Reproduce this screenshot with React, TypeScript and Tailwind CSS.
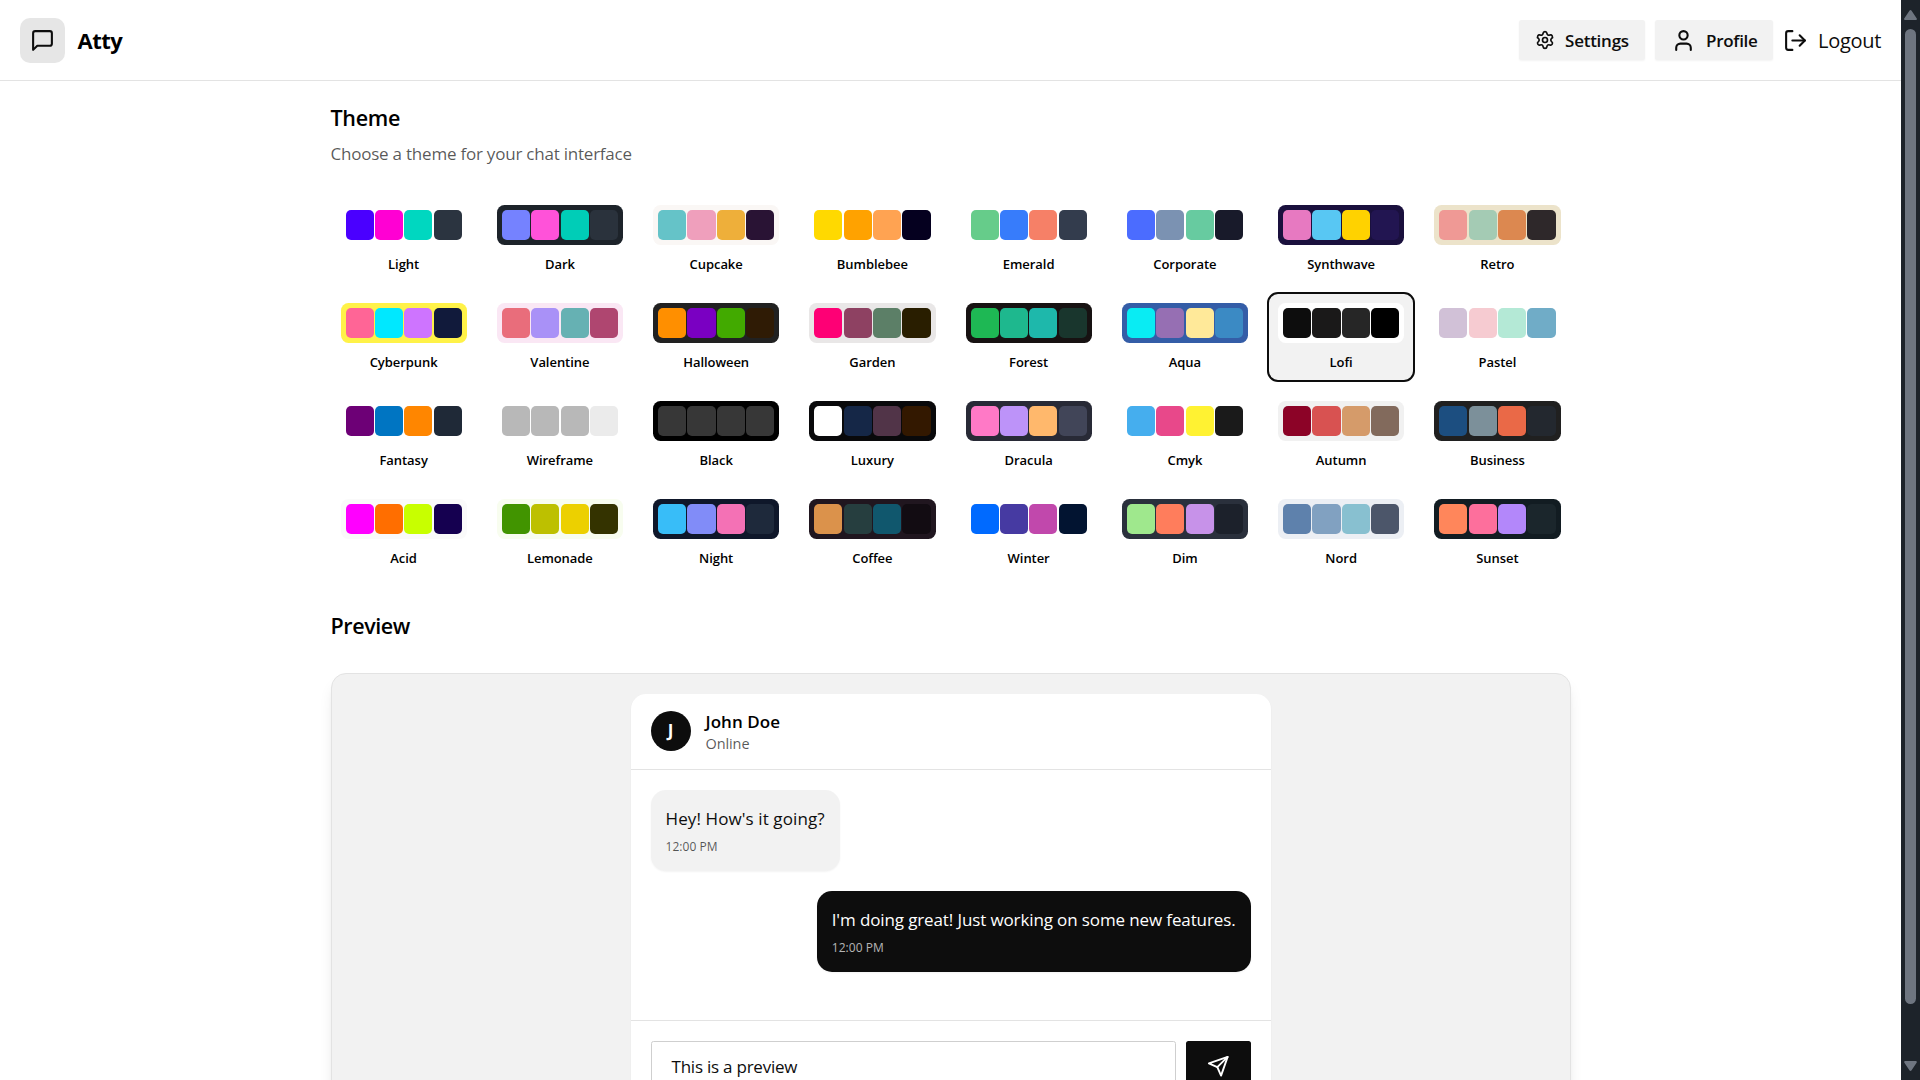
import { Settings, User, LogOut } from "lucide-react";

type Theme = [name: string, base: string, primary: string, secondary: string, accent: string, neutral: string];

const themes: Theme[] = [
  ["Light", "#ffffff", "#4a00ff", "#ff00d3", "#00d7c0", "#2b3440"],
  ["Dark", "#1d232a", "#7582ff", "#ff52d9", "#00cdb7", "#2a323c"],
  ["Cupcake", "#faf7f5", "#65c3c8", "#ef9fbc", "#eeaf3a", "#291334"],
  ["Bumblebee", "#ffffff", "#ffd900", "#ffa200", "#ffa352", "#05001f"],
  ["Emerald", "#ffffff", "#66cc8a", "#377cfb", "#f68067", "#333c4d"],
  ["Corporate", "#ffffff", "#4b6cff", "#7b92b2", "#67cba0", "#181a2a"],
  ["Synthwave", "#1a103d", "#e779c1", "#58c7f3", "#ffd200", "#221551"],
  ["Retro", "#ece3ca", "#ef9995", "#a4cbb4", "#dc8850", "#2e282a"],
  ["Cyberpunk", "#fff248", "#ff6596", "#00e8ff", "#ce74ff", "#111a3b"],
  ["Valentine", "#fae7f4", "#e96d7b", "#a991f7", "#66b1b3", "#af4670"],
  ["Halloween", "#212121", "#ff8f00", "#7a00c2", "#42aa00", "#2f1b05"],
  ["Garden", "#e9e7e7", "#fe0075", "#8e4162", "#5c7f67", "#291e00"],
  ["Forest", "#171212", "#1eb854", "#1eb88e", "#1eb8ab", "#19362d"],
  ["Aqua", "#345da7", "#09ecf3", "#966fb3", "#ffe999", "#3b8ac4"],
  ["Lofi", "#ffffff", "#0d0d0d", "#1a1919", "#262626", "#000000"],
  ["Pastel", "#ffffff", "#d1c1d7", "#f6cbd1", "#b4e9d6", "#70acc7"],
  ["Fantasy", "#ffffff", "#6d0076", "#0075c2", "#ff8600", "#1f2937"],
  ["Wireframe", "#ffffff", "#b8b8b8", "#b8b8b8", "#b8b8b8", "#ebebeb"],
  ["Black", "#000000", "#373737", "#373737", "#373737", "#373737"],
  ["Luxury", "#09090b", "#ffffff", "#152747", "#513448", "#331800"],
  ["Dracula", "#282a36", "#ff79c6", "#bd93f9", "#ffb86c", "#414558"],
  ["Cmyk", "#ffffff", "#45aeee", "#e8488a", "#fff232", "#1a1a1a"],
  ["Autumn", "#f1f1f1", "#8c0327", "#d85251", "#d59b6a", "#826a5c"],
  ["Business", "#202020", "#1c4e80", "#7c909a", "#ea6947", "#23282f"],
  ["Acid", "#fafafa", "#ff00ff", "#ff6e00", "#c8ff00", "#150050"],
  ["Lemonade", "#f8fdef", "#419400", "#bdc000", "#ecd000", "#343300"],
  ["Night", "#0f172a", "#38bdf8", "#818cf8", "#f471b5", "#1e293b"],
  ["Coffee", "#20161f", "#db924b", "#263e3f", "#10576d", "#120c12"],
  ["Winter", "#ffffff", "#006aff", "#463aa2", "#c148ac", "#021431"],
  ["Dim", "#2a303c", "#9fe88d", "#ff7d5c", "#c792e9", "#1c212b"],
  ["Nord", "#eceff4", "#5e81ac", "#81a1c1", "#88c0d0", "#4c566a"],
  ["Sunset", "#121c22", "#ff865b", "#fd6f9c", "#b387fa", "#1b262c"],
];

const selected = "Lofi";

function ThemeCard({ theme }: { theme: Theme }) {
  const [name, base, ...swatches] = theme;
  const active =
    name === selected ? "bg-[#f2f2f2] outline-2 -outline-offset-1 outline-[#0d0d0d]" : "";
  return (
    <button className={`flex h-[88px] flex-col items-center gap-[8.5px] rounded-[10px] p-[10px] ${active}`}>
      <div
        className="grid h-10 w-full shrink-0 grid-cols-4 gap-[1.25px] rounded-[7.5px] p-[5px]"
        style={{ backgroundColor: base }}
      >
        {swatches.map((color, i) => (
          <div key={i} className="rounded-[5px]" style={{ backgroundColor: color }} />
        ))}
      </div>
      <span className="text-[13px] leading-[20px] font-semibold tracking-[-0.05px] text-black">{name}</span>
    </button>
  );
}

function Header() {
  return (
    <header className="flex h-[81px] shrink-0 items-center justify-between border-b border-[#e3e3e3] px-5">
      <div className="flex items-center gap-[12.5px]">
        <div className="flex size-[45px] items-center justify-center rounded-[10px] bg-[#e6e6e6]">
          <svg
            width="25"
            height="25"
            viewBox="0 0 24 24"
            fill="none"
            stroke="#0d0d0d"
            strokeWidth="2"
            strokeLinecap="round"
            strokeLinejoin="round"
          >
            <path d="M21 15a2 2 0 0 1-2 2H7l-4 4V5a2 2 0 0 1 2-2h14a2 2 0 0 1 2 2z" />
          </svg>
        </div>
        <h1 className="text-[22px] leading-[30px] font-bold tracking-[-0.5px] text-black">Atty</h1>
      </div>
      <nav className="flex items-center gap-[10px]">
        <button className="flex h-10 w-[126px] items-center gap-[10px] rounded-[2.5px] bg-[#f2f2f2] pl-4 text-[17px] font-semibold tracking-[-0.25px] shadow-xs">
          <Settings size={20} />
          <span className="pt-[2px]">Settings</span>
        </button>
        <button className="flex h-10 w-[118px] items-center gap-[10px] rounded-[2.5px] bg-[#f2f2f2] pl-4 text-[17px] font-semibold tracking-[-0.3px] shadow-xs">
          <User size={25} />
          <span className="pt-[2px]">Profile</span>
        </button>
        <button className="flex items-center gap-[10px] text-[20px] leading-[30px] tracking-[-0.3px]">
          <LogOut size={25} />
          <span className="pt-[2px]">Logout</span>
        </button>
      </nav>
    </header>
  );
}

function Bubble({ text, own }: { text: string; own?: boolean }) {
  const look = own
    ? "self-end bg-[#0d0d0d] text-white tracking-[-0.12px]"
    : "self-start bg-[#f2f2f2] tracking-[0.1px]";
  const time = own ? "text-white/70" : "text-[#0d0d0d]/70";
  return (
    <div className={`flex h-[81px] flex-col rounded-[15px] px-[15px] pt-[15px] shadow-xs ${look}`}>
      <p className="text-[17px] leading-[27px] whitespace-nowrap">{text}</p>
      <p className={`mt-[7px] text-[12px] leading-[16px] tracking-[0.05px] ${time}`}>12:00 PM</p>
    </div>
  );
}

function Preview() {
  return (
    <section className="mt-[30px] flex h-[520px] shrink-0 justify-center rounded-[15px] border border-[#e3e3e3] bg-[#f2f2f2] pt-5 shadow-lg">
      <div className="flex h-[480px] w-[640px] flex-col overflow-hidden rounded-[15px] bg-white shadow-xs">
        <div className="flex h-[76px] shrink-0 items-center gap-[15px] border-b border-[#e3e3e3] px-5">
          <div className="mb-[2px] flex size-10 items-center justify-center rounded-full bg-[#0d0d0d] text-[17px] font-bold text-white">
            J
          </div>
          <div className="pt-[3px]">
            <h3 className="text-[17px] leading-[22px] font-semibold tracking-[0.05px] text-black">John Doe</h3>
            <p className="text-[14.5px] leading-[22px] tracking-[-0.1px] text-[#0d0d0d]/70">Online</p>
          </div>
        </div>
        <div className="flex h-[250px] shrink-0 flex-col gap-5 p-5">
          <Bubble text="Hey! How's it going?" />
          <Bubble own text="I'm doing great! Just working on some new features." />
        </div>
        <div className="flex gap-[10px] border-t border-[#e3e3e3] p-5">
          <div className="flex h-[50px] flex-1 items-center rounded-[2.5px] border border-[#cfcfcf] px-5 pt-[2px] text-[17px] tracking-[-0.23px]">
            This is a preview
          </div>
          <button className="flex h-[50px] w-[65px] items-center justify-center rounded-[2.5px] bg-[#0d0d0d] text-white">
            <svg
              width="22.5"
              height="22.5"
              viewBox="0 0 24 24"
              fill="none"
              stroke="currentColor"
              strokeWidth="2"
              strokeLinecap="round"
              strokeLinejoin="round"
            >
              <path d="m22 2-7 20-4-9-9-4Z" />
              <path d="M22 2 11 13" />
            </svg>
          </button>
        </div>
      </div>
    </section>
  );
}

function Scrollbar() {
  return (
    <div className="flex w-[19px] shrink-0 flex-col items-center bg-[#1d232a] pt-[10px] pb-[9px]">
      <svg width="13" height="10" viewBox="0 0 13 10" fill="#6e7580">
        <path d="M5.4.8a1.4 1.4 0 0 1 2.2 0l5 7.4a1.1 1.1 0 0 1-.9 1.8H1.3a1.1 1.1 0 0 1-.9-1.8z" />
      </svg>
      <div className="mt-[9px] h-[975px] w-[11px] rounded-full bg-[#6e7580]" />
      <svg className="mt-auto" width="13" height="10" viewBox="0 0 13 10" fill="#6e7580">
        <path d="M5.4 9.2a1.4 1.4 0 0 0 2.2 0l5-7.4a1.1 1.1 0 0 0-.9-1.8H1.3a1.1 1.1 0 0 0-.9 1.8z" />
      </svg>
    </div>
  );
}

export default function App() {
  return (
    <div className="flex h-screen overflow-hidden bg-white font-['Open_Sans','Noto_Sans',sans-serif] text-[#0d0d0d]">
      <div className="flex min-w-0 flex-1 flex-col overflow-hidden">
        <Header />
        <main className="mx-auto flex w-[1240px] flex-col pt-5">
          <h2 className="text-[21.5px] leading-[34px] font-semibold tracking-[-0.3px] text-black">Theme</h2>
          <p className="mt-[6px] text-[17px] leading-[25px] tracking-[-0.22px] text-[#0d0d0d]/70">
            Choose a theme for your chat interface
          </p>
          <div className="mt-[29px] grid grid-cols-8 gap-[10px]">
            {themes.map((theme) => (
              <ThemeCard key={theme[0]} theme={theme} />
            ))}
          </div>
          <h2 className="mt-8 text-[21.5px] leading-[34px] font-semibold tracking-[-0.4px] text-black">Preview</h2>
          <Preview />
        </main>
      </div>
      <Scrollbar />
    </div>
  );
}
